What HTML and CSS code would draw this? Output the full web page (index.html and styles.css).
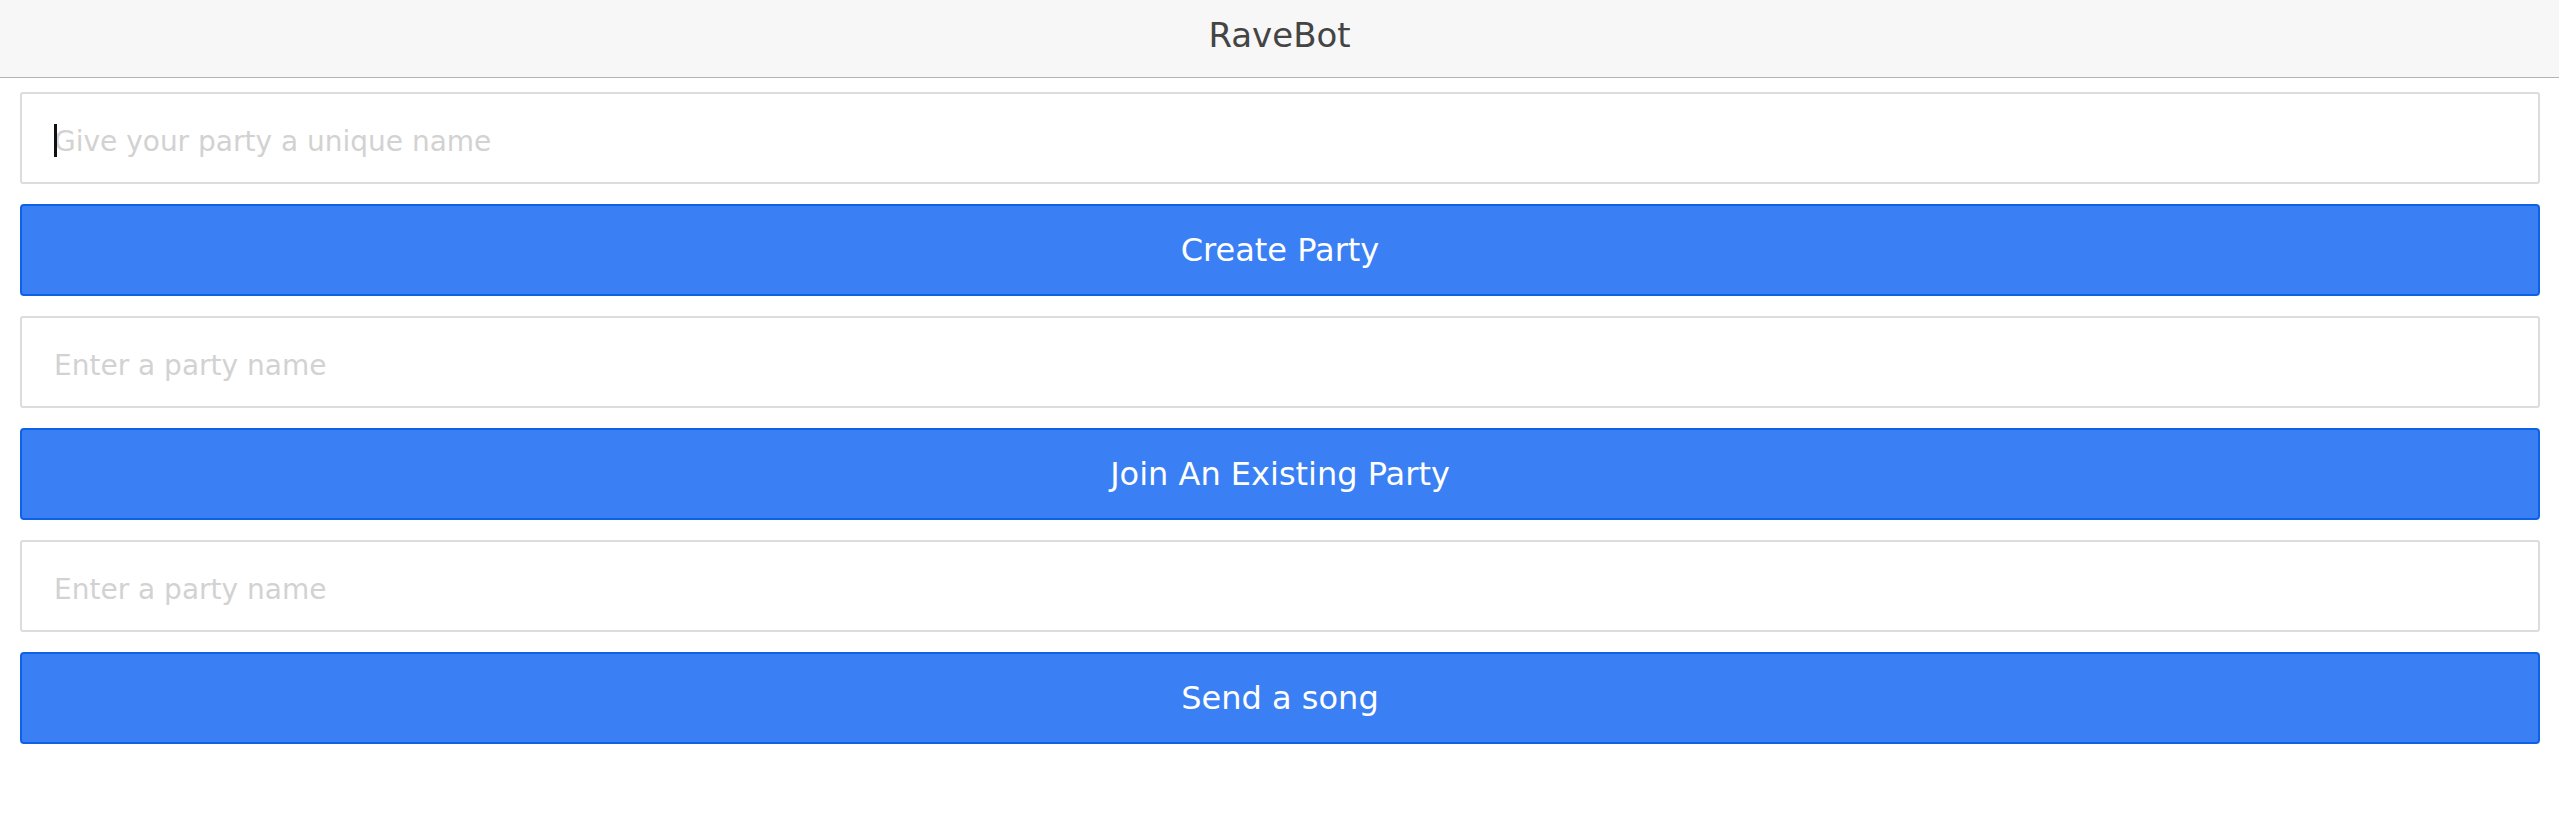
FILE: index.html
```html
<!DOCTYPE html>
<html lang="en">
<head>
<meta charset="utf-8">
<title>RaveBot</title>
<link rel="stylesheet" href="styles.css">
</head>
<body>
  <header class="topbar">
    <h1 class="title">RaveBot</h1>
  </header>
  <main class="forms">
    <div class="field-wrap">
      <input class="field" type="text" placeholder="Give your party a unique name">
      <span class="caret" aria-hidden="true"></span>
    </div>
    <button class="action" type="button">Create Party</button>
    <input class="field" type="text" placeholder="Enter a party name">
    <button class="action" type="button">Join An Existing Party</button>
    <input class="field" type="text" placeholder="Enter a party name">
    <button class="action" type="button">Send a song</button>
  </main>
</body>
</html>
```

FILE: styles.css
```css
html, body {
  margin: 0;
  padding: 0;
  background: #ffffff;
  font-family: "DejaVu Sans", "Liberation Sans", sans-serif;
}

.topbar {
  box-sizing: border-box;
  height: 78px;
  padding-top: 15px;
  background: #f7f7f7;
  border-bottom: 1px solid #b3b3b3;
  text-align: center;
}

.title {
  margin: 0;
  font-size: 34px;
  font-weight: normal;
  line-height: normal;
  color: #444444;
}

.forms {
  display: flex;
  flex-direction: column;
  gap: 20px;
  padding: 14px 19px 0 20px;
}

.field-wrap {
  position: relative;
}

.field {
  display: block;
  box-sizing: border-box;
  height: 92px;
  width: 100%;
  margin: 0;
  padding: 6px 20px 0 32px;
  border: 2px solid #dcdcdc;
  border-radius: 3px;
  background: #ffffff;
  font-family: "DejaVu Sans", sans-serif;
  font-size: 28px;
  color: #222222;
  outline: none;
}

.field::placeholder {
  color: #d2d2d2;
  opacity: 1;
}

.caret {
  position: absolute;
  left: 34px;
  top: 32px;
  width: 3px;
  height: 33px;
  background: #111111;
}

.action {
  box-sizing: border-box;
  height: 92px;
  width: 100%;
  margin: 0;
  padding: 0;
  border: 2px solid #0e62e8;
  border-radius: 4px;
  background: #3a80f4;
  color: #ffffff;
  font-family: "DejaVu Sans", sans-serif;
  font-size: 32px;
  cursor: pointer;
}
```
